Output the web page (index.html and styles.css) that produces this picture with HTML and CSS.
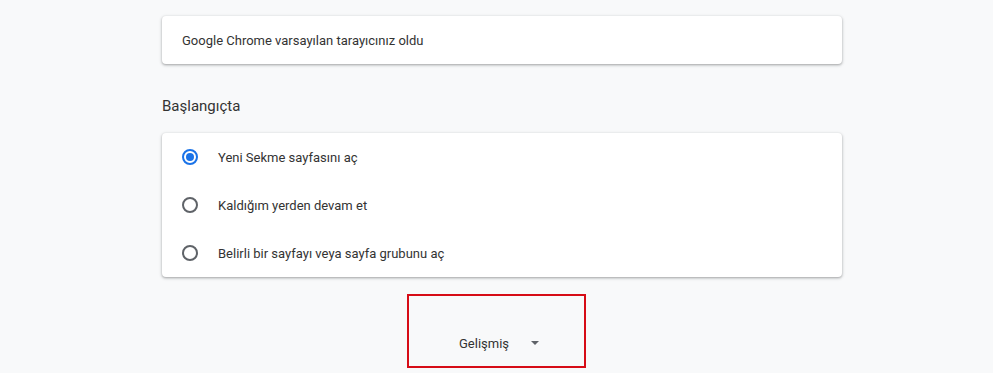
FILE: index.html
```html
<!DOCTYPE html>
<html lang="tr">
<head>
    <meta charset="UTF-8">
    <meta name="viewport" content="width=device-width, initial-scale=1.0">
    <title>Ayarlar</title>
    <link rel="stylesheet" href="styles.css">
</head>
<body>

    <div class="page">
        <!-- Default browser -->
        <div class="card">
            <div class="row">Google Chrome varsayılan tarayıcınız oldu</div>
        </div>

        <!-- On startup -->
        <h2 class="section-title">Başlangıçta</h2>
        <div class="card">
            <label class="row radio-row">
                <span class="radio checked"></span>
                <span>Yeni Sekme sayfasını aç</span>
            </label>
            <label class="row radio-row">
                <span class="radio"></span>
                <span>Kaldığım yerden devam et</span>
            </label>
            <label class="row radio-row">
                <span class="radio"></span>
                <span>Belirli bir sayfayı veya sayfa grubunu aç</span>
            </label>
        </div>

        <!-- Advanced -->
        <div class="advanced-box">
            <div class="advanced-btn">
                <span>Gelişmiş</span>
                <span class="arrow"></span>
            </div>
        </div>
    </div>

</body>
</html>
```

FILE: styles.css
```css
body {
    margin: 0;
    background-color: #f8f9fa;
    font-family: Roboto, "Liberation Sans", Arial, sans-serif;
    color: #333;
}
.page {
    width: 680px;
    margin-left: 162px;
    padding-top: 16px;
}
.card {
    background-color: #fff;
    border-radius: 4px;
    box-shadow: 0 1px 2px rgba(60, 64, 67, 0.3), 0 1px 3px 1px rgba(60, 64, 67, 0.15);
}
.row {
    height: 48px;
    display: flex;
    align-items: center;
    padding: 0 20px;
    font-size: 13px;
}
.section-title {
    margin: 0;
    padding: 32px 0 17px;
    font-size: 15px;
    font-weight: 400;
    line-height: 20px;
    color: #333;
}
.radio-row {
    gap: 20px;
}
.radio {
    width: 16px;
    height: 16px;
    box-sizing: border-box;
    border: 2px solid #5f6368;
    border-radius: 50%;
    display: flex;
    align-items: center;
    justify-content: center;
}
.radio.checked {
    border-color: #1a73e8;
}
.radio.checked::after {
    content: "";
    width: 8px;
    height: 8px;
    border-radius: 50%;
    background-color: #1a73e8;
}
.advanced-box {
    width: 179px;
    height: 74px;
    box-sizing: border-box;
    margin: 17px 0 0 245px;
    border: 2px solid #d60c16;
    display: flex;
    justify-content: center;
    padding-top: 37px;
}
.advanced-btn {
    display: flex;
    align-items: center;
    gap: 22px;
    height: 20px;
    font-size: 13px;
    color: #333;
    padding-left: 5px;
}
.arrow {
    width: 0;
    height: 0;
    border-left: 4px solid transparent;
    border-right: 4px solid transparent;
    border-top: 4px solid #5f6368;
}
```
